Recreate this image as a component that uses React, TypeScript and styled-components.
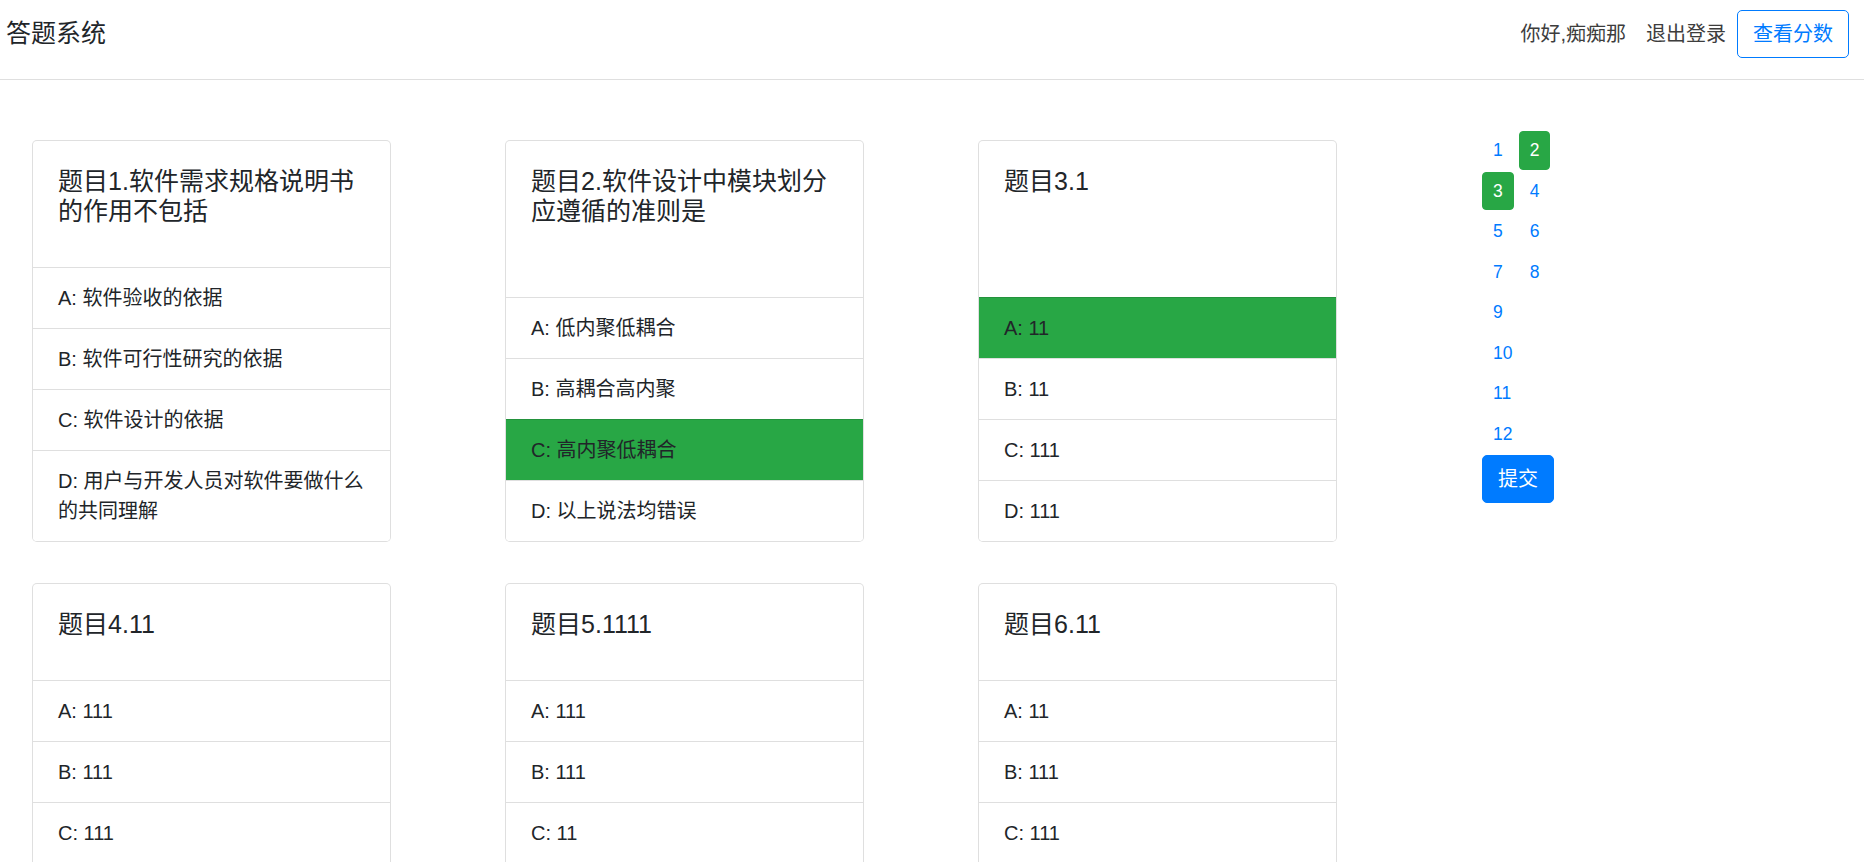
import React from "react";
import styled, { createGlobalStyle } from "styled-components";

const GlobalStyle = createGlobalStyle`
  html, body {
    margin: 0;
    padding: 0;
    background: #ffffff;
  }
  body {
    font-family: "Liberation Sans", "Noto Sans CJK SC", sans-serif;
    font-size: 20px;
    line-height: 1.5;
    color: #212529;
  }
  * { box-sizing: border-box; }
`;

const Header = styled.header`
  display: flex;
  align-items: center;
  justify-content: space-between;
  height: 80px;
  padding: 10px 15px 22px 6px;
  border-bottom: 1px solid #dfdfdf;
`;

const Brand = styled.div`
  font-size: 25px;
  line-height: 1.5;
  color: #212529;
`;

const NavRight = styled.nav`
  display: flex;
  align-items: center;
`;

const NavLink = styled.a`
  padding: 0 10px;
  color: #3d3d3d;
  font-size: 20px;
  text-decoration: none;
  cursor: pointer;
`;

const OutlineButton = styled.button`
  margin-left: 1px;
  font-family: inherit;
  font-size: 20px;
  line-height: 1.5;
  padding: 8px 15px;
  color: #007bff;
  background: transparent;
  border: 1px solid #007bff;
  border-radius: 5px;
  cursor: pointer;
`;

const Main = styled.main`
  display: flex;
  align-items: flex-start;
  padding: 50px 0 40px 32px;
`;

const CardGrid = styled.div`
  display: grid;
  grid-template-columns: repeat(3, 359px);
  column-gap: 114px;
  row-gap: 41px;
  margin-top: 10px;
`;

const Card = styled.div`
  display: flex;
  flex-direction: column;
  border: 1px solid rgba(0, 0, 0, 0.125);
  border-radius: 5px;
  overflow: hidden;
  background: #fff;
`;

const CardBody = styled.div`
  flex: 1 1 auto;
  padding: 25px;
`;

const CardTitle = styled.h5`
  margin: 0 0 16px;
  font-size: 25px;
  font-weight: 400;
  line-height: 1.2;
  color: #212529;
`;

const OptionList = styled.ul`
  list-style: none;
  margin: 0;
  padding: 0;
`;

const Option = styled.li<{ $selected?: boolean }>`
  padding: 15px 25px;
  border-top: 1px solid rgba(0, 0, 0, 0.125);
  font-size: 20px;
  line-height: 30px;
  color: #212529;
  background: ${(p) => (p.$selected ? "#28a745" : "#fff")};
  cursor: pointer;
`;

const Sidebar = styled.aside`
  display: flex;
  flex-wrap: wrap;
  align-content: flex-start;
  width: 74px;
  column-gap: 5px;
  row-gap: 2px;
  margin-left: 145px;
  margin-top: 1px;
`;

const NumButton = styled.button<{ $done?: boolean }>`
  font-family: inherit;
  font-size: 17.5px;
  line-height: 1.5;
  height: 38.5px;
  padding: 5px 10px;
  border: 1px solid ${(p) => (p.$done ? "#28a745" : "transparent")};
  border-radius: 4px;
  background: ${(p) => (p.$done ? "#28a745" : "transparent")};
  color: ${(p) => (p.$done ? "#ffffff" : "#007bff")};
  cursor: pointer;
`;

const SubmitButton = styled.button`
  font-family: inherit;
  font-size: 20px;
  line-height: 1.5;
  padding: 8px 15px;
  border: 1px solid #007bff;
  border-radius: 5px;
  background: #007bff;
  color: #ffffff;
  cursor: pointer;
`;

type Question = {
  title: string;
  options: string[];
  selected?: number;
};

const questions: Question[] = [
  {
    title: "软件需求规格说明书的作用不包括",
    options: ["软件验收的依据", "软件可行性研究的依据", "软件设计的依据", "用户与开发人员对软件要做什么的共同理解"],
  },
  {
    title: "软件设计中模块划分应遵循的准则是",
    options: ["低内聚低耦合", "高耦合高内聚", "高内聚低耦合", "以上说法均错误"],
    selected: 2,
  },
  { title: "1", options: ["11", "11", "111", "111"], selected: 0 },
  { title: "11", options: ["111", "111", "111", "111"] },
  { title: "1111", options: ["111", "111", "11", "111"] },
  { title: "11", options: ["11", "111", "111", "111"] },
  { title: "11", options: ["111", "111", "111", "111"] },
  { title: "111", options: ["11", "11", "111", "111"] },
  { title: "11", options: ["111", "11", "111", "11"] },
  { title: "1", options: ["1", "11", "111", "1111"] },
  { title: "11", options: ["111", "111", "11", "11"] },
  { title: "111", options: ["11", "111", "111", "111"] },
];

const letters = ["A", "B", "C", "D"];

export default function App() {
  return (
    <>
      <GlobalStyle />
      <Header>
        <Brand>答题系统</Brand>
        <NavRight>
          <NavLink>你好,痴痴那</NavLink>
          <NavLink>退出登录</NavLink>
          <OutlineButton>查看分数</OutlineButton>
        </NavRight>
      </Header>
      <Main>
        <CardGrid>
          {questions.map((q, i) => (
            <Card key={i}>
              <CardBody>
                <CardTitle>
                  题目{i + 1}.{q.title}
                </CardTitle>
              </CardBody>
              <OptionList>
                {q.options.map((o, j) => (
                  <Option key={j} $selected={q.selected === j}>
                    {letters[j]}: {o}
                  </Option>
                ))}
              </OptionList>
            </Card>
          ))}
        </CardGrid>
        <Sidebar>
          {questions.map((q, i) => (
            <NumButton key={i} $done={q.selected !== undefined}>
              {i + 1}
            </NumButton>
          ))}
          <SubmitButton>提交</SubmitButton>
        </Sidebar>
      </Main>
    </>
  );
}
